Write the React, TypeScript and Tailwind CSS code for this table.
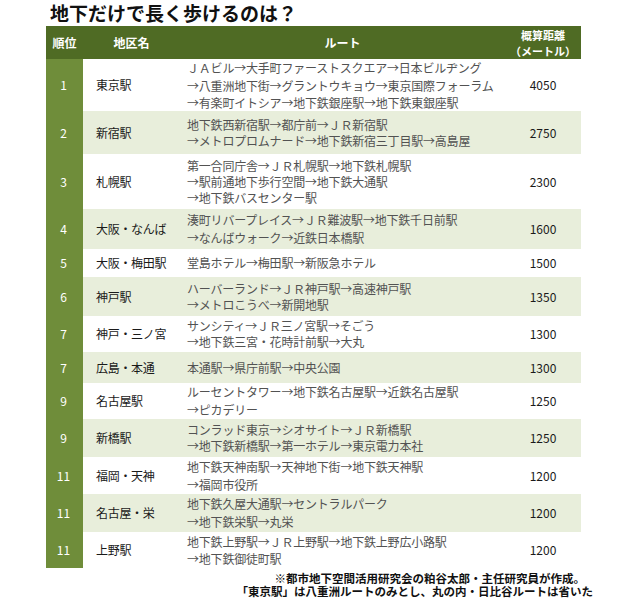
const rows = [
  { rank: "1", area: "東京駅", km: "4050", h: "h-[52px]", lh: "leading-[17.5px]", bg: "bg-white", route: ["ＪＡビル→大手町ファーストスクエア→日本ビルヂング", "→八重洲地下街→グラントウキョウ→東京国際フォーラム", "→有楽町イトシア→地下鉄銀座駅→地下鉄東銀座駅"] },
  { rank: "2", area: "新宿駅", km: "2750", h: "h-[43px]", lh: "leading-[16px]", bg: "bg-[#e8eedb]", route: ["地下鉄西新宿駅→都庁前→ＪＲ新宿駅", "→メトロプロムナード→地下鉄新宿三丁目駅→高島屋"] },
  { rank: "3", area: "札幌駅", km: "2300", h: "h-[55px]", lh: "leading-[16px]", bg: "bg-white", route: ["第一合同庁舎→ＪＲ札幌駅→地下鉄札幌駅", "→駅前通地下歩行空間→地下鉄大通駅", "→地下鉄バスセンター駅"] },
  { rank: "4", area: "大阪・なんば", km: "1600", h: "h-[40px]", lh: "leading-[18px]", bg: "bg-[#e8eedb]", route: ["湊町リバープレイス→ＪＲ難波駅→地下鉄千日前駅", "→なんばウォーク→近鉄日本橋駅"] },
  { rank: "5", area: "大阪・梅田駅", km: "1500", h: "h-[28px]", lh: "leading-[16px]", bg: "bg-white", route: ["堂島ホテル→梅田駅→新阪急ホテル"] },
  { rank: "6", area: "神戸駅", km: "1350", h: "h-[39px]", lh: "leading-[16px]", bg: "bg-[#e8eedb]", route: ["ハーバーランド→ＪＲ神戸駅→高速神戸駅", "→メトロこうべ→新開地駅"] },
  { rank: "7", area: "神戸・三ノ宮", km: "1300", h: "h-[36px]", lh: "leading-[16px]", bg: "bg-white", route: ["サンシティ→ＪＲ三ノ宮駅→そごう", "→地下鉄三宮・花時計前駅→大丸"] },
  { rank: "7", area: "広島・本通", km: "1300", h: "h-[31px]", lh: "leading-[16px]", bg: "bg-[#e8eedb]", route: ["本通駅→県庁前駅→中央公園"] },
  { rank: "9", area: "名古屋駅", km: "1250", h: "h-[36px]", lh: "leading-[18px]", bg: "bg-white", route: ["ルーセントタワー→地下鉄名古屋駅→近鉄名古屋駅", "→ピカデリー"] },
  { rank: "9", area: "新橋駅", km: "1250", h: "h-[38px]", lh: "leading-[16px]", bg: "bg-[#e8eedb]", route: ["コンラッド東京→シオサイト→ＪＲ新橋駅", "→地下鉄新橋駅→第一ホテル→東京電力本社"] },
  { rank: "11", area: "福岡・天神", km: "1200", h: "h-[37px]", lh: "leading-[18px]", bg: "bg-white", route: ["地下鉄天神南駅→天神地下街→地下鉄天神駅", "→福岡市役所"] },
  { rank: "11", area: "名古屋・栄", km: "1200", h: "h-[38px]", lh: "leading-[18px]", bg: "bg-[#e8eedb]", route: ["地下鉄久屋大通駅→セントラルパーク", "→地下鉄栄駅→丸栄"] },
  { rank: "11", area: "上野駅", km: "1200", h: "h-[36px]", lh: "leading-[17px]", bg: "bg-white", route: ["地下鉄上野駅→ＪＲ上野駅→地下鉄上野広小路駅", "→地下鉄御徒町駅"] },
];

export default function App() {
  return (
    <div className="h-[601px] w-[630px] bg-white font-['Noto_Sans_CJK_JP',sans-serif]">
      <h1 className="pl-[50px] text-[19px] font-bold leading-[26px] text-[#111]">
        地下だけで長く歩けるのは？
      </h1>

      <div className="ml-[46px] w-[535px]">
        <div className="grid h-[33px] grid-cols-[37px_97px_325px_76px] items-center bg-[#4f6b24] text-[12px] font-bold text-white">
          <div className="text-center">順位</div>
          <div className="text-center">地区名</div>
          <div className="text-center">ルート</div>
          <div className="pt-[1px] text-center text-[11px] leading-[16px]">
            <div>概算距離</div>
            <div>（メートル）</div>
          </div>
        </div>

        {rows.map((row, i) => (
          <div
            key={i}
            className={`grid grid-cols-[37px_97px_325px_76px] ${row.h} ${row.bg}`}
          >
            <div className="flex items-center justify-center bg-[#6f8d3a] pr-[2px] text-[12px] text-white">
              {row.rank}
            </div>
            <div className="flex items-center pl-[13px] text-[12px] tracking-[-0.3px] whitespace-nowrap text-[#1a1a1a]">
              {row.area}
            </div>
            <div className={`flex flex-col justify-center pl-[7px] text-[12px] tracking-[-0.2px] whitespace-nowrap text-[#525252] ${row.lh}`}>
              {row.route.map((line) => (
                <div key={line}>{line}</div>
              ))}
            </div>
            <div className="flex items-center justify-center text-[12px] text-[#1a1a1a]">
              {row.km}
            </div>
          </div>
        ))}
      </div>

      <div className="mt-[4px] flex flex-col items-end pr-[37px] text-[11.5px] font-bold leading-[13px] text-[#111]">
        <div className="mr-[8px]">※都市地下空間活用研究会の粕谷太郎・主任研究員が作成。</div>
        <div>「東京駅」は八重洲ルートのみとし、丸の内・日比谷ルートは省いた</div>
      </div>
    </div>
  );
}
